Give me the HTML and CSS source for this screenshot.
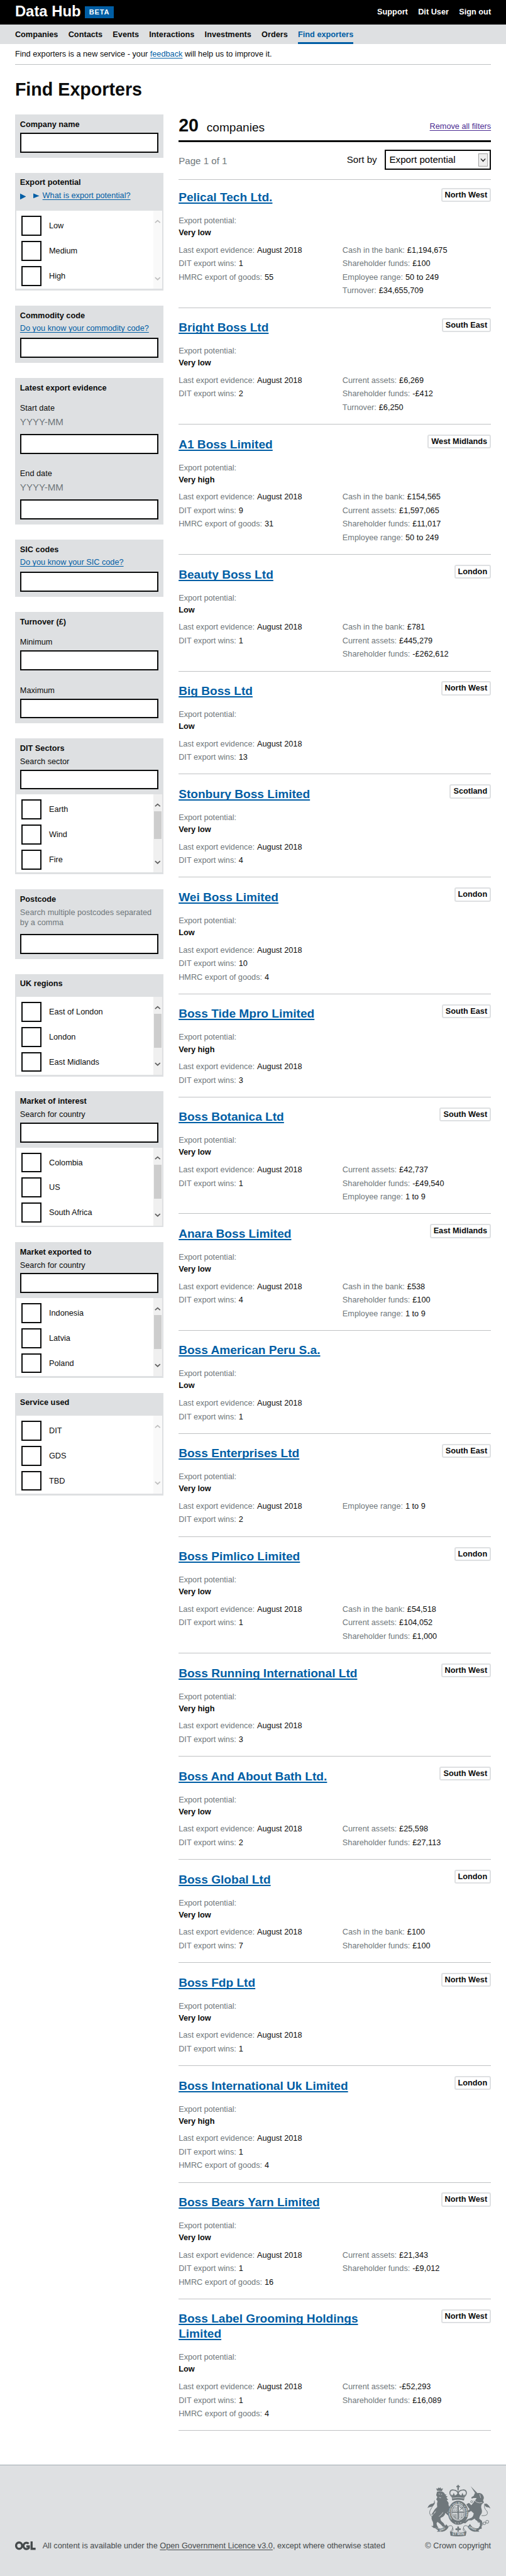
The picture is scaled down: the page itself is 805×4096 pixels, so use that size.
FILE: index.html
```html
<!DOCTYPE html>
<html lang="en">
<head>
<meta charset="utf-8">
<title>Find Exporters - Data Hub</title>
<link rel="stylesheet" href="styles.css">
</head>
<body>
<header class="header">
  <div class="brand"><span class="brand-name">Data Hub</span><span class="beta">BETA</span></div>
  <nav class="user-nav"><a href="#">Support</a><a href="#">Dit User</a><a href="#">Sign out</a></nav>
</header>
<nav class="main-nav">
  <a href="#">Companies</a><a href="#">Contacts</a><a href="#">Events</a><a href="#">Interactions</a><a href="#">Investments</a><a href="#">Orders</a><a href="#" class="active">Find exporters</a>
</nav>
<p class="banner">Find exporters is a new service - your <a class="link" href="#">feedback</a> will help us to improve it.</p>
<h1 class="page-title">Find Exporters</h1>

<div class="columns">
  <aside class="filters">
    <section class="filter">
      <h2>Company name</h2>
      <div class="input"></div>
    </section>

    <section class="filter has-list">
      <h2>Export potential</h2>
      <div class="summary">
        <svg class="tri tri-outer" viewBox="0 0 12 12"><path d="M0 0L12 6L0 12Z"/></svg>
        <svg class="tri tri-inner" viewBox="0 0 12 10"><path d="M0 0L12 5L0 10Z"/></svg>
        <a class="link" href="#">What is export potential?</a>
      </div>
      <div class="options">
        <ul><li>Low</li><li>Medium</li><li>High</li></ul>
        <div class="scroll disabled">
          <svg viewBox="0 0 12 8"><path d="M1 6.5L6 2L11 6.5"/></svg>
          <svg viewBox="0 0 12 8"><path d="M1 1.5L6 6L11 1.5"/></svg>
        </div>
      </div>
    </section>

    <section class="filter">
      <h2>Commodity code</h2>
      <div class="help"><a class="link" href="#">Do you know your commodity code?</a></div>
      <div class="input"></div>
    </section>

    <section class="filter">
      <h2>Latest export evidence</h2>
      <div class="field-label">Start date</div>
      <div class="format">YYYY-MM</div>
      <div class="input"></div>
      <div class="field-label second">End date</div>
      <div class="format">YYYY-MM</div>
      <div class="input"></div>
    </section>

    <section class="filter">
      <h2>SIC codes</h2>
      <div class="help"><a class="link" href="#">Do you know your SIC code?</a></div>
      <div class="input"></div>
    </section>

    <section class="filter">
      <h2>Turnover (£)</h2>
      <div class="field-label">Minimum</div>
      <div class="input close"></div>
      <div class="field-label second">Maximum</div>
      <div class="input close"></div>
    </section>

    <section class="filter has-list">
      <h2>DIT Sectors</h2>
      <div class="search-label">Search sector</div>
      <div class="input"></div>
      <div class="options">
        <ul><li>Earth</li><li>Wind</li><li>Fire</li></ul>
        <div class="scroll">
          <svg viewBox="0 0 12 8"><path d="M1 6.5L6 2L11 6.5"/></svg>
          <i class="thumb short"></i>
          <svg viewBox="0 0 12 8"><path d="M1 1.5L6 6L11 1.5"/></svg>
        </div>
      </div>
    </section>

    <section class="filter">
      <h2>Postcode</h2>
      <div class="hint">Search multiple postcodes separated by a comma</div>
      <div class="input"></div>
    </section>

    <section class="filter has-list">
      <h2>UK regions</h2>
      <div class="options bare">
        <ul><li>East of London</li><li>London</li><li>East Midlands</li></ul>
        <div class="scroll">
          <svg viewBox="0 0 12 8"><path d="M1 6.5L6 2L11 6.5"/></svg>
          <i class="thumb"></i>
          <svg viewBox="0 0 12 8"><path d="M1 1.5L6 6L11 1.5"/></svg>
        </div>
      </div>
    </section>

    <section class="filter has-list">
      <h2>Market of interest</h2>
      <div class="search-label">Search for country</div>
      <div class="input"></div>
      <div class="options">
        <ul><li>Colombia</li><li>US</li><li>South Africa</li></ul>
        <div class="scroll">
          <svg viewBox="0 0 12 8"><path d="M1 6.5L6 2L11 6.5"/></svg>
          <i class="thumb"></i>
          <svg viewBox="0 0 12 8"><path d="M1 1.5L6 6L11 1.5"/></svg>
        </div>
      </div>
    </section>

    <section class="filter has-list">
      <h2>Market exported to</h2>
      <div class="search-label">Search for country</div>
      <div class="input"></div>
      <div class="options">
        <ul><li>Indonesia</li><li>Latvia</li><li>Poland</li></ul>
        <div class="scroll">
          <svg viewBox="0 0 12 8"><path d="M1 6.5L6 2L11 6.5"/></svg>
          <i class="thumb"></i>
          <svg viewBox="0 0 12 8"><path d="M1 1.5L6 6L11 1.5"/></svg>
        </div>
      </div>
    </section>

    <section class="filter has-list">
      <h2>Service used</h2>
      <div class="options bare">
        <ul><li>DIT</li><li>GDS</li><li>TBD</li></ul>
        <div class="scroll disabled">
          <svg viewBox="0 0 12 8"><path d="M1 6.5L6 2L11 6.5"/></svg>
          <svg viewBox="0 0 12 8"><path d="M1 1.5L6 6L11 1.5"/></svg>
        </div>
      </div>
    </section>
  </aside>

  <main class="results">
    <div class="results-head">
      <div><b class="count">20</b><span class="count-label">companies</span></div>
      <a class="remove" href="#">Remove all filters</a>
    </div>
    <div class="sort-row">
      <span class="page-count">Page 1 of 1</span>
      <div class="sort">
        <span>Sort by</span>
        <div class="select">Export potential<svg viewBox="0 0 19 26"><rect x=".5" y=".5" width="18" height="25"/><path d="M5 10.5L9.5 15.5L14 10.5"/></svg></div>
      </div>
    </div>

    <article class="company">
      <div class="top"><h3><a href="#">Pelical Tech Ltd.</a></h3><span class="badge">North West</span></div>
      <p class="potential">Export potential:<b>Very low</b></p>
      <div class="facts">
        <dl><div><dt>Last export evidence:</dt><dd>August 2018</dd></div><div><dt>DIT export wins:</dt><dd>1</dd></div><div><dt>HMRC export of goods:</dt><dd>55</dd></div></dl>
        <dl><div><dt>Cash in the bank:</dt><dd>£1,194,675</dd></div><div><dt>Shareholder funds:</dt><dd>£100</dd></div><div><dt>Employee range:</dt><dd>50 to 249</dd></div><div><dt>Turnover:</dt><dd>£34,655,709</dd></div></dl>
      </div>
    </article>

    <article class="company">
      <div class="top"><h3><a href="#">Bright Boss Ltd</a></h3><span class="badge">South East</span></div>
      <p class="potential">Export potential:<b>Very low</b></p>
      <div class="facts">
        <dl><div><dt>Last export evidence:</dt><dd>August 2018</dd></div><div><dt>DIT export wins:</dt><dd>2</dd></div></dl>
        <dl><div><dt>Current assets:</dt><dd>£6,269</dd></div><div><dt>Shareholder funds:</dt><dd>-£412</dd></div><div><dt>Turnover:</dt><dd>£6,250</dd></div></dl>
      </div>
    </article>

    <article class="company">
      <div class="top"><h3><a href="#">A1 Boss Limited</a></h3><span class="badge">West Midlands</span></div>
      <p class="potential">Export potential:<b>Very high</b></p>
      <div class="facts">
        <dl><div><dt>Last export evidence:</dt><dd>August 2018</dd></div><div><dt>DIT export wins:</dt><dd>9</dd></div><div><dt>HMRC export of goods:</dt><dd>31</dd></div></dl>
        <dl><div><dt>Cash in the bank:</dt><dd>£154,565</dd></div><div><dt>Current assets:</dt><dd>£1,597,065</dd></div><div><dt>Shareholder funds:</dt><dd>£11,017</dd></div><div><dt>Employee range:</dt><dd>50 to 249</dd></div></dl>
      </div>
    </article>

    <article class="company">
      <div class="top"><h3><a href="#">Beauty Boss Ltd</a></h3><span class="badge">London</span></div>
      <p class="potential">Export potential:<b>Low</b></p>
      <div class="facts">
        <dl><div><dt>Last export evidence:</dt><dd>August 2018</dd></div><div><dt>DIT export wins:</dt><dd>1</dd></div></dl>
        <dl><div><dt>Cash in the bank:</dt><dd>£781</dd></div><div><dt>Current assets:</dt><dd>£445,279</dd></div><div><dt>Shareholder funds:</dt><dd>-£262,612</dd></div></dl>
      </div>
    </article>

    <article class="company">
      <div class="top"><h3><a href="#">Big Boss Ltd</a></h3><span class="badge">North West</span></div>
      <p class="potential">Export potential:<b>Low</b></p>
      <div class="facts">
        <dl><div><dt>Last export evidence:</dt><dd>August 2018</dd></div><div><dt>DIT export wins:</dt><dd>13</dd></div></dl>
      </div>
    </article>

    <article class="company">
      <div class="top"><h3><a href="#">Stonbury Boss Limited</a></h3><span class="badge">Scotland</span></div>
      <p class="potential">Export potential:<b>Very low</b></p>
      <div class="facts">
        <dl><div><dt>Last export evidence:</dt><dd>August 2018</dd></div><div><dt>DIT export wins:</dt><dd>4</dd></div></dl>
      </div>
    </article>

    <article class="company">
      <div class="top"><h3><a href="#">Wei Boss Limited</a></h3><span class="badge">London</span></div>
      <p class="potential">Export potential:<b>Low</b></p>
      <div class="facts">
        <dl><div><dt>Last export evidence:</dt><dd>August 2018</dd></div><div><dt>DIT export wins:</dt><dd>10</dd></div><div><dt>HMRC export of goods:</dt><dd>4</dd></div></dl>
      </div>
    </article>

    <article class="company">
      <div class="top"><h3><a href="#">Boss Tide Mpro Limited</a></h3><span class="badge">South East</span></div>
      <p class="potential">Export potential:<b>Very high</b></p>
      <div class="facts">
        <dl><div><dt>Last export evidence:</dt><dd>August 2018</dd></div><div><dt>DIT export wins:</dt><dd>3</dd></div></dl>
      </div>
    </article>

    <article class="company">
      <div class="top"><h3><a href="#">Boss Botanica Ltd</a></h3><span class="badge">South West</span></div>
      <p class="potential">Export potential:<b>Very low</b></p>
      <div class="facts">
        <dl><div><dt>Last export evidence:</dt><dd>August 2018</dd></div><div><dt>DIT export wins:</dt><dd>1</dd></div></dl>
        <dl><div><dt>Current assets:</dt><dd>£42,737</dd></div><div><dt>Shareholder funds:</dt><dd>-£49,540</dd></div><div><dt>Employee range:</dt><dd>1 to 9</dd></div></dl>
      </div>
    </article>

    <article class="company">
      <div class="top"><h3><a href="#">Anara Boss Limited</a></h3><span class="badge">East Midlands</span></div>
      <p class="potential">Export potential:<b>Very low</b></p>
      <div class="facts">
        <dl><div><dt>Last export evidence:</dt><dd>August 2018</dd></div><div><dt>DIT export wins:</dt><dd>4</dd></div></dl>
        <dl><div><dt>Cash in the bank:</dt><dd>£538</dd></div><div><dt>Shareholder funds:</dt><dd>£100</dd></div><div><dt>Employee range:</dt><dd>1 to 9</dd></div></dl>
      </div>
    </article>

    <article class="company">
      <div class="top"><h3><a href="#">Boss American Peru S.a.</a></h3></div>
      <p class="potential">Export potential:<b>Low</b></p>
      <div class="facts">
        <dl><div><dt>Last export evidence:</dt><dd>August 2018</dd></div><div><dt>DIT export wins:</dt><dd>1</dd></div></dl>
      </div>
    </article>

    <article class="company">
      <div class="top"><h3><a href="#">Boss Enterprises Ltd</a></h3><span class="badge">South East</span></div>
      <p class="potential">Export potential:<b>Very low</b></p>
      <div class="facts">
        <dl><div><dt>Last export evidence:</dt><dd>August 2018</dd></div><div><dt>DIT export wins:</dt><dd>2</dd></div></dl>
        <dl><div><dt>Employee range:</dt><dd>1 to 9</dd></div></dl>
      </div>
    </article>

    <article class="company">
      <div class="top"><h3><a href="#">Boss Pimlico Limited</a></h3><span class="badge">London</span></div>
      <p class="potential">Export potential:<b>Very low</b></p>
      <div class="facts">
        <dl><div><dt>Last export evidence:</dt><dd>August 2018</dd></div><div><dt>DIT export wins:</dt><dd>1</dd></div></dl>
        <dl><div><dt>Cash in the bank:</dt><dd>£54,518</dd></div><div><dt>Current assets:</dt><dd>£104,052</dd></div><div><dt>Shareholder funds:</dt><dd>£1,000</dd></div></dl>
      </div>
    </article>

    <article class="company">
      <div class="top"><h3><a href="#">Boss Running International Ltd</a></h3><span class="badge">North West</span></div>
      <p class="potential">Export potential:<b>Very high</b></p>
      <div class="facts">
        <dl><div><dt>Last export evidence:</dt><dd>August 2018</dd></div><div><dt>DIT export wins:</dt><dd>3</dd></div></dl>
      </div>
    </article>

    <article class="company">
      <div class="top"><h3><a href="#">Boss And About Bath Ltd.</a></h3><span class="badge">South West</span></div>
      <p class="potential">Export potential:<b>Very low</b></p>
      <div class="facts">
        <dl><div><dt>Last export evidence:</dt><dd>August 2018</dd></div><div><dt>DIT export wins:</dt><dd>2</dd></div></dl>
        <dl><div><dt>Current assets:</dt><dd>£25,598</dd></div><div><dt>Shareholder funds:</dt><dd>£27,113</dd></div></dl>
      </div>
    </article>

    <article class="company">
      <div class="top"><h3><a href="#">Boss Global Ltd</a></h3><span class="badge">London</span></div>
      <p class="potential">Export potential:<b>Very low</b></p>
      <div class="facts">
        <dl><div><dt>Last export evidence:</dt><dd>August 2018</dd></div><div><dt>DIT export wins:</dt><dd>7</dd></div></dl>
        <dl><div><dt>Cash in the bank:</dt><dd>£100</dd></div><div><dt>Shareholder funds:</dt><dd>£100</dd></div></dl>
      </div>
    </article>

    <article class="company">
      <div class="top"><h3><a href="#">Boss Fdp Ltd</a></h3><span class="badge">North West</span></div>
      <p class="potential">Export potential:<b>Very low</b></p>
      <div class="facts">
        <dl><div><dt>Last export evidence:</dt><dd>August 2018</dd></div><div><dt>DIT export wins:</dt><dd>1</dd></div></dl>
      </div>
    </article>

    <article class="company">
      <div class="top"><h3><a href="#">Boss International Uk Limited</a></h3><span class="badge">London</span></div>
      <p class="potential">Export potential:<b>Very high</b></p>
      <div class="facts">
        <dl><div><dt>Last export evidence:</dt><dd>August 2018</dd></div><div><dt>DIT export wins:</dt><dd>1</dd></div><div><dt>HMRC export of goods:</dt><dd>4</dd></div></dl>
      </div>
    </article>

    <article class="company">
      <div class="top"><h3><a href="#">Boss Bears Yarn Limited</a></h3><span class="badge">North West</span></div>
      <p class="potential">Export potential:<b>Very low</b></p>
      <div class="facts">
        <dl><div><dt>Last export evidence:</dt><dd>August 2018</dd></div><div><dt>DIT export wins:</dt><dd>1</dd></div><div><dt>HMRC export of goods:</dt><dd>16</dd></div></dl>
        <dl><div><dt>Current assets:</dt><dd>£21,343</dd></div><div><dt>Shareholder funds:</dt><dd>-£9,012</dd></div></dl>
      </div>
    </article>

    <article class="company">
      <div class="top"><h3><a href="#">Boss Label Grooming Holdings Limited</a></h3><span class="badge">North West</span></div>
      <p class="potential">Export potential:<b>Low</b></p>
      <div class="facts">
        <dl><div><dt>Last export evidence:</dt><dd>August 2018</dd></div><div><dt>DIT export wins:</dt><dd>1</dd></div><div><dt>HMRC export of goods:</dt><dd>4</dd></div></dl>
        <dl><div><dt>Current assets:</dt><dd>-£52,293</dd></div><div><dt>Shareholder funds:</dt><dd>£16,089</dd></div></dl>
      </div>
    </article>
  </main>
</div>

<footer class="footer">
  <div class="licence">
    <svg class="ogl" viewBox="0 0 41 17">
      <ellipse cx="8" cy="8.5" rx="6" ry="6.3"/>
      <path d="M27 4.6A6 6.3 0 1 0 27.5 12.8V9.8H22.5"/>
      <path d="M33 0V14.8H41"/>
    </svg>
    <span>All content is available under the <a href="#">Open Government Licence v3.0</a>, except where otherwise stated</span>
  </div>
  <div class="copyright">
    <svg class="crest" viewBox="24 26 376 308">
      <defs><path id="garter" d="M171 230A48 55 0 1 1 243 230"/></defs>
      <!-- crown -->
      <g class="line">
        <path d="M170 98C148 76 158 54 180 57C194 58 204 66 207 78C210 66 220 58 234 57C256 54 266 76 244 98"/>
        <path d="M207 44V98" stroke-width="4"/>
      </g>
      <g class="solid">
        <path d="M203 27h8v6h6v8h-6v7h-8v-7h-6v-8h6z"/>
        <circle cx="207" cy="51" r="5"/>
        <path d="M170 100L166 82L174 90L181 74L188 90L198 84L207 72L216 84L226 90L233 74L240 90L248 82L244 100Z"/>
        <path d="M169 101Q207 92 245 101L242 120Q207 110 172 120Z"/>
      </g>
      <path class="gap" d="M172 106Q207 98 242 106"/>
      <!-- lion -->
      <g class="solid">
        <path d="M82 62L75 47L84 50L89 42L95 47L101 41L106 50L117 47L110 64Q96 60 82 62Z"/>
        <path d="M81 67Q96 62 112 66Q124 71 130 84L137 82L133 92L145 96L137 102L148 116L139 117L150 134Q147 146 155 158L160 174L154 184L142 190L154 202L156 212L144 207L131 194Q128 208 118 216L102 224Q100 238 112 248Q124 256 128 268L138 276L116 277L102 262L88 250Q80 246 78 258Q80 272 90 284L62 284L46 272L58 272Q60 250 52 240Q42 218 58 204Q72 194 76 180Q66 188 60 202L46 206L54 194Q66 170 82 158Q78 140 84 124L76 112L83 100L76 88Z"/>
      </g>
      <path class="line thin" d="M52 218Q30 200 40 178Q52 160 59 144Q68 130 66 120"/>
      <path class="solid" d="M24 165Q30 142 56 138L70 130Q62 156 44 158Q32 158 24 165Z"/>
      <path class="gap" d="M90 80l8 2M105 82l6 1M93 101l12 3M92 216Q108 206 117 190"/>
      <!-- unicorn -->
      <g class="solid">
        <path d="M282 34L318 71L309 76Z"/>
        <path d="M306 78L316 69L322 76Q346 72 355 88Q366 104 356 118L361 132L350 140Q342 152 346 166Q354 190 344 202Q334 214 333 228L350 242L350 262Q346 276 348 290L328 284L338 270L338 252L318 240Q308 236 306 228L288 238L270 238L250 256L236 254L264 232L288 222Q300 212 300 196L284 182L272 190L262 186L276 172L266 158L256 142L272 134L286 148Q296 136 306 124L318 105L300 105L288 109L286 101L301 91Z"/>
      </g>
      <path class="gap" d="M302 116L318 130L334 134L352 132M336 82L342 104"/>
      <g class="line thin">
        <path d="M300 120L312 134L330 142L354 138M347 210Q392 214 380 184Q358 164 366 144Q378 128 398 166"/>
        <circle cx="288" cy="127" r="6"/><circle cx="331" cy="244" r="7"/><circle cx="347" cy="260" r="8"/><circle cx="364" cy="256" r="8"/><circle cx="381" cy="247" r="9"/>
      </g>
      <path class="solid" d="M362 140Q386 136 398 164L388 160Q374 162 366 148Z"/>
      <!-- shield and garter -->
      <ellipse class="solid" cx="207" cy="193" rx="61" ry="72"/>
      <ellipse class="pale" cx="207" cy="190" rx="43" ry="49"/>
      <text class="motto"><textPath href="#garter" textLength="225" lengthAdjust="spacingAndGlyphs">HONI SOIT QUI MAL Y PENSE</textPath></text>
      <ellipse class="line thin" cx="207" cy="190" rx="38" ry="43"/>
      <path class="solid" d="M203 148h8v38h33v7h-33v39h-8v-39h-33v-7h33z"/>
      <path class="line dashes" d="M178 162H202M174 170H202M173 178H202M213 201H240M213 210H238M213 219H232M214 154L240 180M240 158L214 180"/>
      <path class="line thin" d="M180 200Q178 220 198 226M188 200V221M195 200V224M218 160Q228 166 238 164"/>
      <path class="gap" d="M188 252l8 3M205 254l6 2M219 254l8-3"/>
      <!-- ribbons -->
      <g class="solid">
        <path d="M68 284L102 288Q124 284 136 262L150 278Q140 300 114 306H80L88 298Z"/>
        <path d="M264 278L278 260Q290 284 314 286L346 284L328 298L334 306H302Q276 300 264 278Z"/>
        <path d="M158 306Q207 316 257 306L252 330Q207 338 162 330Z"/>
        <path d="M207 272Q218 284 210 290Q222 280 224 292Q220 300 210 296L212 306H202L204 296Q192 300 190 292Q194 280 204 290Q198 282 207 272Z"/>
      </g>
      <path class="line thin" d="M146 276Q168 262 174 278Q178 288 160 306M268 276Q246 262 240 278Q236 288 256 306M174 282Q184 302 162 308M240 282Q230 302 254 308"/>
      <text class="ribbon" x="174" y="328">ET MON</text>
      <text class="ribbon small" transform="translate(99 304) rotate(-26)">DIEU</text>
      <text class="ribbon small" transform="translate(271 281) rotate(26)">DROIT</text>
    </svg>
    <span>© Crown copyright</span>
  </div>
</footer>
</body>
</html>
```

FILE: styles.css
```css
/* 1rem is ten layout units */
html { font-size: 7.96px; }

*, *::before { box-sizing: border-box; }

body {
  margin: 0;
  background: #fff;
  color: #0b0c0c;
  font-family: Arial, "Liberation Sans", sans-serif;
  font-size: 1.6rem;
  min-height: 100vh;
  display: flex;
  flex-direction: column;
}

h1, h2, h3, p, ul, dl, dd { margin: 0; padding: 0; }
a { color: inherit; text-decoration: none; }

.link {
  color: #005ea5;
  text-decoration: underline 1px;
  text-underline-offset: .2rem;
  text-decoration-skip-ink: none;
}

/* Header */
.header {
  height: 4.9rem;
  padding: 0 3rem;
  background: #000;
  color: #fff;
  display: flex;
  justify-content: space-between;
  align-items: flex-start;
}
.brand { display: flex; align-items: flex-start; }
.brand-name { font-size: 3rem; font-weight: bold; line-height: 3.4rem; padding-top: .55rem; width: 14rem; white-space: nowrap; }
.beta {
  margin-top: 1.2rem;
  width: 5.8rem;
  height: 2.4rem;
  padding-left: .8rem;
  line-height: 2.4rem;
  font-size: 1.4rem;
  font-weight: bold;
  letter-spacing: .1rem;
  background: #005ea5;
}
.user-nav { display: flex; gap: 2.05rem; font-weight: bold; line-height: 2rem; padding-top: 1.35rem; }

.main-nav {
  height: 3.9rem;
  padding: 0 3rem;
  background: #dee0e2;
  display: flex;
  gap: 2.04rem;
  font-weight: bold;
  line-height: 3.9rem;
}
.main-nav .active { color: #005ea5; border-bottom: .5rem solid #005ea5; }

.banner {
  margin: 0 3rem;
  height: 4.1rem;
  padding-top: .95rem;
  line-height: 2rem;
  border-bottom: 1px solid #bfc1c3;
}
.page-title { margin: 2.8rem 3rem 0; height: 7.2rem; font-size: 3.6rem; line-height: 4.4rem; }

/* Columns */
.columns { display: grid; grid-template-columns: 29.7rem 1fr; column-gap: 3rem; padding: 0 3rem; }

/* Filters */
.filters { display: flex; flex-direction: column; gap: 3rem; }
.filter { padding: 1rem; background: #dee0e2; display: flow-root; }
.filter h2 { font-size: 1.6rem; line-height: 2.04rem; }
.has-list { padding: 1rem .3rem .3rem; }
.has-list > h2, .has-list > .summary, .has-list > .search-label, .has-list > .input { margin-left: .7rem; margin-right: .7rem; }
.input { height: 4rem; margin-top: .9rem; background: #fff; border: 2px solid #0b0c0c; }
h2 + .input { margin-top: .56rem; }
.help { line-height: 2rem; margin-top: .55rem; }
.field-label { line-height: 2rem; margin-top: 2rem; }
.field-label.second { margin-top: 3rem; }
.format { font-size: 1.9rem; line-height: 2.5rem; margin-top: .5rem; color: #6f777b; }
.format + .input { margin-top: 1.1rem; }
.close { margin-top: .63rem; }
.search-label { line-height: 2rem; margin-top: .6rem; }
.search-label + .input { margin-top: .56rem; }
.hint { line-height: 2rem; margin-top: .6rem; color: #6f777b; }
.hint + .input { margin-top: 1.3rem; }
.summary { display: flex; line-height: 2rem; margin-top: .6rem; align-items: flex-start; }
.tri { fill: #005ea5; flex: none; }
.tri-outer { width: 1.2rem; height: 1.4rem; margin: .45rem 1.5rem 0 0; }
.tri-inner { width: 1.2rem; height: 1.1rem; margin: .42rem .6rem 0 0; }
.options { height: 15.6rem; margin-top: 1rem; background: #fff; display: flex; justify-content: space-between; }
.summary + .options { margin-top: 2rem; }
.bare { margin-top: 1.55rem; }
.options ul { list-style: none; padding: 1rem 0 0 1rem; display: flex; flex-direction: column; gap: 1rem; }
.options li { display: flex; align-items: center; gap: 1.5rem; line-height: 4.2rem; height: 4rem; }
.options li::before { content: ""; width: 4rem; height: 4rem; border: 2px solid #0b0c0c; }
.scroll { width: 1.7rem; background: #f0f0f0; padding: 1.7rem .1rem; display: flex; flex-direction: column; align-items: center; }
.scroll svg { width: 1.2rem; height: .8rem; fill: none; stroke: #606060; stroke-width: 2.2; flex: none; }
.scroll svg:last-child { margin-top: auto; }
.disabled { background: #f9f9f9; }
.disabled svg { stroke: #bfbfbf; }
.thumb { width: 1.5rem; height: 6.8rem; margin-top: .9rem; background: #cdcdcd; }
.thumb.short { height: 5.5rem; }

/* Results */
.results-head { height: 5.5rem; border-bottom: .5rem solid #0b0c0c; display: flex; justify-content: space-between; }
.results-head > div { line-height: 4.4rem; white-space: nowrap; }
.count { font-size: 3.6rem; margin-right: 1.6rem; }
.count-label { font-size: 2.4rem; }
.remove { line-height: 2rem; margin-top: 1.35rem; color: #4c2c92; text-decoration: underline 1px; text-underline-offset: .25rem; }
.sort-row { height: 7.6rem; display: flex; justify-content: space-between; align-items: flex-start; font-size: 1.9rem; border-bottom: 1px solid #bfc1c3; padding-top: 1.5rem; }
.page-count { line-height: 2.4rem; padding-top: 1.05rem; color: #6f777b; }
.sort { display: flex; gap: 1.6rem; line-height: 2.4rem; }
.sort > span { padding-top: .75rem; }
.select { width: 21.2rem; height: 4rem; border: 2px solid #0b0c0c; padding: .5rem .4rem 0 .65rem; display: flex; justify-content: space-between; color: #000; }
.select svg { width: 1.9rem; height: 2.6rem; }
.select rect { fill: #efefef; stroke: #8a8a8a; }
.select path { fill: none; stroke: #222; stroke-width: 1.8; }

.company { border-bottom: 1px solid #bfc1c3; padding: 2.45rem 0 1.98rem; }
.sort-row + .company { padding-top: 1.98rem; }
.top { display: flex; justify-content: space-between; align-items: flex-start; }
.company h3 { font-size: 2.4rem; line-height: 3rem; max-width: 42rem; color: #005ea5; }
.company h3 a { text-decoration: underline; text-decoration-thickness: .25rem; text-underline-offset: .3rem; text-decoration-skip-ink: none; }
.badge { margin-top: -.45rem; height: 2.8rem; line-height: 2.3rem; padding: 0 .5rem; border: 2px solid #dee0e2; border-radius: .4rem; font-weight: bold; }
.potential { margin-top: 1.9rem; line-height: 2.4rem; color: #6f777b; }
.potential b { display: block; color: #0b0c0c; }
.facts { margin-top: .95rem; display: grid; grid-template-columns: 32.75rem 1fr; }
.facts dl > div { display: flex; gap: .5rem; line-height: 2.7rem; }
.facts dt { color: #6f777b; }
.facts dd { color: #0b0c0c; }

/* Footer */
.footer {
  margin-top: auto;
  height: 22.3rem;
  padding: 4rem 3rem 0;
  background: #dee0e2;
  border-top: 1px solid #a1acb2;
  color: #454a4c;
  display: flex;
  justify-content: space-between;
  line-height: 2rem;
}
.licence { display: flex; padding-top: 11.15rem; }
.ogl { width: 4.1rem; height: 1.7rem; margin: .15rem 1.4rem 0 0; fill: none; stroke: #454a4c; stroke-width: 4.2; }
.licence a { text-decoration: underline 1px; text-underline-offset: .25rem; }
.copyright { display: flex; flex-direction: column; align-items: flex-end; gap: .9rem; white-space: nowrap; }
.crest { width: 12.6rem; height: 10.3rem; margin-right: .15rem; overflow: visible; }
.crest .solid { fill: #6f777b; }
.crest .pale { fill: #dee0e2; }
.crest .line { fill: none; stroke: #6f777b; stroke-width: 6; }
.crest .thin { stroke-width: 3.5; }
.crest .dashes { stroke-width: 4; stroke-dasharray: 7 3; }
.crest .gap { fill: none; stroke: #dee0e2; stroke-width: 3; }
.crest text { fill: #dee0e2; font-weight: bold; }
.crest .motto { font-size: 12px; }
.crest .ribbon { font-size: 18px; }
.crest .small { font-size: 15px; }
```
